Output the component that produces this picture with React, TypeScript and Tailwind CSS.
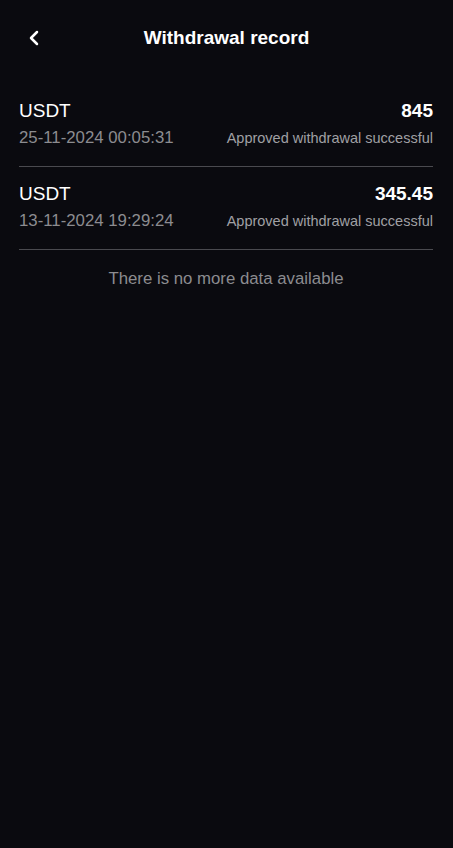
import { ChevronLeft } from 'lucide-react';

const records = [
  { coin: 'USDT', amount: '845', time: '25-11-2024 00:05:31', status: 'Approved withdrawal successful' },
  { coin: 'USDT', amount: '345.45', time: '13-11-2024 19:29:24', status: 'Approved withdrawal successful' },
];

export default function App() {
  return (
    <div
      className="min-h-[848px] w-full bg-[#0a0a0f] text-white"
      style={{ fontFamily: '"Liberation Sans", Arial, sans-serif' }}
    >
      {/* Header */}
      <div className="relative flex h-[76px] items-center justify-center">
        <button className="absolute left-[22px] top-[26px] flex h-6 w-6 items-center justify-center text-white">
          <ChevronLeft size={24} strokeWidth={2.5} />
        </button>
        <h1 className="text-[19px] font-bold">Withdrawal record</h1>
      </div>

      {/* List */}
      <div className="pl-[19px] pr-[20px] pt-2">
        {records.map((r, i) => (
          <div key={i} className="border-b border-[#4a4a4f] pt-[15px] pb-[16px]">
            <div className="flex items-center justify-between text-[19px] leading-6">
              <span>{r.coin}</span>
              <span className="font-bold">{r.amount}</span>
            </div>
            <div className="mt-[3px] flex items-center justify-between leading-6">
              <span className="text-[16.8px] text-[#8c8c90]">{r.time}</span>
              <span className="text-[14.5px] text-[#a0a0a4]">{r.status}</span>
            </div>
          </div>
        ))}
        <p className="pt-[17px] text-center text-[16.8px] leading-6 text-[#8c8c90]">
          There is no more data available
        </p>
      </div>
    </div>
  );
}
